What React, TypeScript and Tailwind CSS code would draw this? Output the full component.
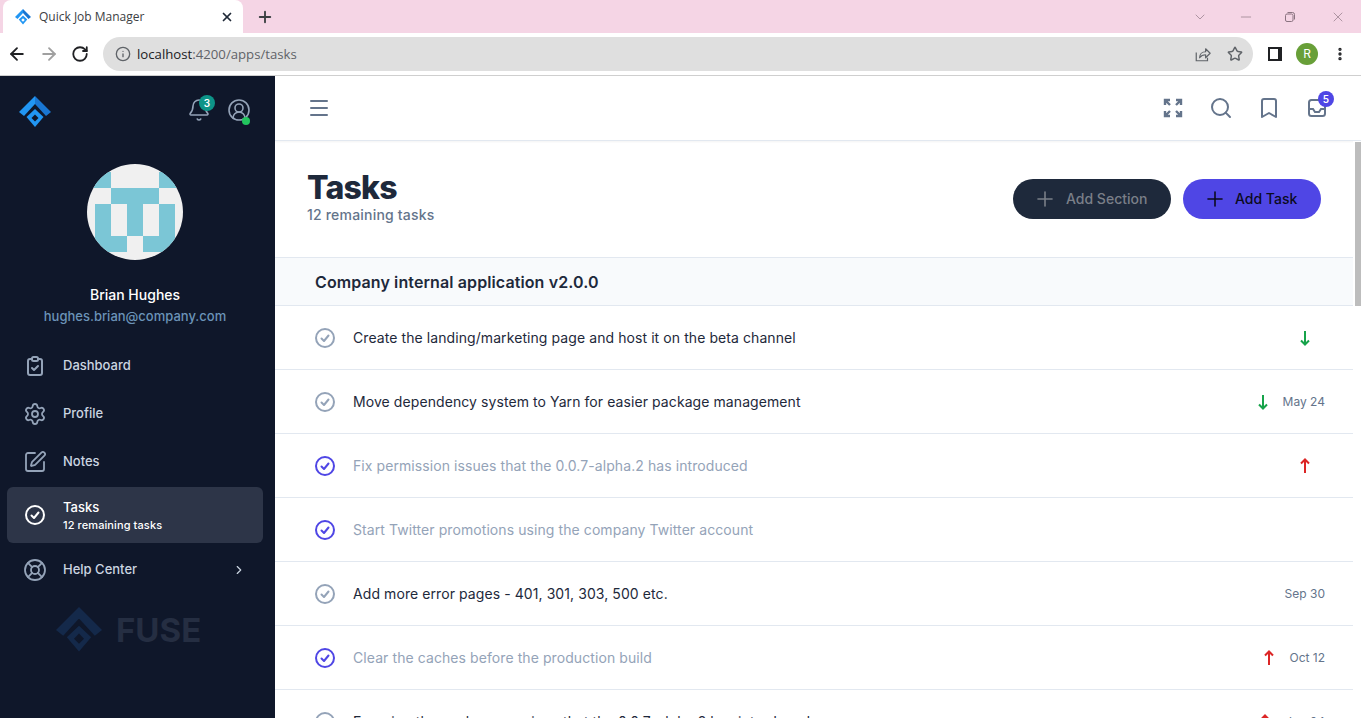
import { ArrowLeft, ArrowRight, Bell, Bookmark, ChevronDown, ChevronRight, CircleUserRound, Info, LifeBuoy, Menu, Minus, MoreVertical, Plus, RotateCw, Search, Settings, SquarePen, Star, X } from "lucide-react";

const tasks = [
  { title: "Create the landing/marketing page and host it on the beta channel", done: false, priority: "down", date: "" },
  { title: "Move dependency system to Yarn for easier package management", done: false, priority: "down", date: "May 24" },
  { title: "Fix permission issues that the 0.0.7-alpha.2 has introduced", done: true, priority: "up", date: "" },
  { title: "Start Twitter promotions using the company Twitter account", done: true, priority: "", date: "" },
  { title: "Add more error pages - 401, 301, 303, 500 etc.", done: false, priority: "", date: "Sep 30" },
  { title: "Clear the caches before the production build", done: true, priority: "up", date: "Oct 12" },
  { title: "Ensuring the package versions that the 0.0.7-alpha.2 has introduced", done: false, priority: "up", date: "Jun 04" },
];

function Logo({ className, hole = "#0f172a", dim }: { className: string; hole?: string; dim?: boolean }) {
  return (
    <svg viewBox="0 0 32 32" className={className}>
      <path d="M16 0 L16 8 L5 20 L0 16 Z" fill={dim ? "#14294a" : "#2196f3"} />
      <path d="M16 0 L32 16 L27 20 L16 8 Z" fill={dim ? "#14294a" : "#1976d2"} />
      <path d="M16 13 L24.5 21 L16 31 L7.5 21 Z" fill={dim ? "#14294a" : "#2196f3"} />
      <path d="M16 18.5 L19.5 22 L16 25.5 L12.5 22 Z" fill={hole} />
    </svg>
  );
}

function CheckCircle({ className }: { className: string }) {
  return (
    <svg viewBox="0 0 24 24" fill="none" stroke="currentColor" strokeWidth="2" className={className}>
      <circle cx="12" cy="12" r="9" />
      <path d="M8.5 12.5 L11 15 L15.5 9.5" strokeLinecap="round" strokeLinejoin="round" />
    </svg>
  );
}

function ClipboardCheck({ className }: { className: string }) {
  return (
    <svg viewBox="0 0 24 24" fill="none" stroke="currentColor" strokeWidth="2" className={className}>
      <path d="M9 5H7a2 2 0 0 0-2 2v12a2 2 0 0 0 2 2h10a2 2 0 0 0 2-2V7a2 2 0 0 0-2-2h-2" />
      <rect x="9" y="3" width="6" height="4" rx="1.5" />
      <path d="M9 14l2 2 4-4" strokeLinecap="round" strokeLinejoin="round" />
    </svg>
  );
}

function PriorityArrow({ up }: { up: boolean }) {
  return (
    <svg viewBox="0 0 20 20" fill="none" stroke="currentColor" strokeWidth="2" className={`w-5 h-5 ${up ? "text-[#dc2626]" : "text-[#16a34a]"}`}>
      {up ? <path d="M10 17V3.5M6 7.5l4-4 4 4" /> : <path d="M10 3v13.5M6 12.5l4 4 4-4" />}
    </svg>
  );
}

function Avatar() {
  const cells = [
    [1, 0, 0, 0, 1],
    [0, 1, 1, 1, 0],
    [1, 0, 1, 0, 1],
    [1, 0, 1, 0, 1],
    [1, 1, 0, 1, 1],
  ];
  return (
    <div className="w-24 h-24 rounded-full overflow-hidden bg-[#f0f0f0]">
      <svg viewBox="0 0 96 96" className="w-24 h-24">
        {cells.map((row, y) =>
          row.map((c, x) => (c ? <rect key={`${x}-${y}`} x={x * 16 + 8} y={y * 16 + 8} width="16" height="16" fill="#7bc6d6" /> : null))
        )}
        <rect x="0" y="8" width="24" height="16" fill="#7bc6d6" />
        <rect x="72" y="8" width="24" height="16" fill="#7bc6d6" />
      </svg>
    </div>
  );
}

function NavItem({ label, icon, arrow }: { label: string; icon: React.ReactNode; arrow?: boolean }) {
  return (
    <div className="h-12 px-4 flex items-center text-[13px] font-medium text-[#cbd5e1]">
      <span className="w-6 h-6 mr-4 flex items-center justify-center text-[#94a3b8]">{icon}</span>
      <span>{label}</span>
      {arrow && <ChevronRight className="w-3.5 h-3.5 ml-auto mr-[1px]" />}
    </div>
  );
}

export default function App() {
  return (
    <div className="h-[718px] w-[1361px] overflow-hidden flex flex-col bg-white font-['Inter',sans-serif]">
      {/* BROWSER TABS */}
      <div className="h-[33px] shrink-0 bg-[#f5d5e5] flex items-center pl-[3px] text-[#1f2937]">
        <div className="h-[33px] w-[240px] bg-white rounded-t-lg flex items-center pl-[12px] pr-[9px]">
          <Logo className="w-4 h-4" hole="#ffffff" />
          <span className="ml-2 text-xs text-[#3c4043] font-['Open_Sans',sans-serif]">Quick Job Manager</span>
          <X className="w-3.5 h-3.5 ml-auto" strokeWidth={3} />
        </div>
        <Plus className="w-[18px] h-[18px] ml-[13px] text-[#3c4043]" strokeWidth={2.5} />
        <div className="ml-auto h-[26px] flex items-center text-[#8a7380]">
          <ChevronDown className="w-4 h-4 mr-[30px]" strokeWidth={1} />
          <Minus className="w-4 h-4 mr-[30px]" strokeWidth={1} />
          <svg viewBox="0 0 12 12" className="w-3 h-3 mr-[34px]" fill="none" stroke="currentColor" strokeWidth="1">
            <rect x="1.5" y="3" width="7.5" height="7.5" rx="1.5" />
            <path d="M3.5 1.5h5a2 2 0 0 1 2 2v5" />
          </svg>
          <X className="w-4 h-4 mr-[15px]" strokeWidth={1} />
        </div>
      </div>

      {/* BROWSER TOOLBAR */}
      <div className="h-[43px] shrink-0 bg-white border-b border-[#cfcfcf] flex items-center pl-[7px] pr-[13px] text-[#202124]">
        <ArrowLeft className="w-5 h-5" strokeWidth={2.2} />
        <ArrowRight className="w-5 h-5 ml-[12px] text-[#a0a0a0]" strokeWidth={2.2} />
        <RotateCw className="w-[18px] h-[18px] ml-[12px]" strokeWidth={2.4} />
        <div className="ml-[14px] h-[34px] w-[1150px] rounded-full bg-[#dfdfdf] flex items-center pl-[12px] pr-[10px]">
          <Info className="w-4 h-4 text-[#5f6368]" />
          <span className="ml-[6px] pt-[2px] text-[13.2px] text-[#202124] font-['Open_Sans',sans-serif]">
            localhost<span className="text-[#5f6368]">:4200/apps/tasks</span>
          </span>
          <svg viewBox="0 0 24 24" className="w-[18px] h-[18px] ml-auto text-[#5f6368]" fill="none" stroke="currentColor" strokeWidth="1.6">
            <path d="M3 10v11h15v-4" />
            <path d="M7.5 17c0-5 3.5-8 8-8V5l6 6-6 6v-4c-3.5 0-6 1-8 4z" strokeLinejoin="round" />
          </svg>
          <Star className="w-4 h-4 ml-[15px] text-[#5f6368]" strokeWidth={2.2} />
        </div>
        <span className="ml-[15px] w-[14px] h-[14px] bg-[#202124] flex">
          <span className="w-[8px] h-[10px] m-[2px] bg-white" />
        </span>
        <span className="ml-[14px] w-[22px] h-[22px] rounded-full bg-[#689f38] text-white text-xs flex items-center justify-center">R</span>
        <MoreVertical className="w-4 h-4 ml-[14px]" strokeWidth={3} />
      </div>

      <div className="flex-1 flex min-h-0">
        {/* SIDEBAR */}
        <aside className="w-[275px] shrink-0 bg-[#0f172a] flex flex-col">
          <div className="h-[68px] flex items-center pl-[19px] pr-[24px] text-[#94a3b8]">
            <Logo className="w-8 h-8 mt-1" />
            <div className="relative ml-auto mr-4">
              <Bell className="w-6 h-6" strokeWidth={1.6} />
              <span className="absolute -top-[3px] -right-[4px] w-4 h-4 rounded-full bg-[#0d9488] text-white text-[10px] font-semibold flex items-center justify-center">3</span>
            </div>
            <div className="relative">
              <CircleUserRound className="w-6 h-6" strokeWidth={1.6} />
              <span className="absolute -bottom-[3px] right-[1px] w-2 h-2 rounded-full bg-[#22c55e]" />
            </div>
          </div>
          <div className="flex flex-col items-center pt-5 pr-[5px]">
            <Avatar />
            <div className="mt-[25px] text-sm font-medium text-white leading-5">Brian Hughes</div>
            <div className="mt-[1px] text-[13px] font-medium text-[#6b93b8] leading-5">hughes.brian@company.com</div>
          </div>
          <nav className="mt-4 pl-[7px] pr-[12px] flex flex-col">
            <NavItem label="Dashboard" icon={<ClipboardCheck className="w-6 h-6" />} />
            <NavItem label="Profile" icon={<Settings className="w-6 h-6" strokeWidth={1.8} />} />
            <NavItem label="Notes" icon={<SquarePen className="w-6 h-6" strokeWidth={1.8} />} />
            <div className="mt-[1px] h-14 px-4 rounded-md bg-[#2d3548] flex items-center text-white">
              <span className="w-6 h-6 mr-4">
                <CheckCircle className="w-6 h-6" />
              </span>
              <div>
                <div className="text-[13px] font-medium leading-5">Tasks</div>
                <div className="text-[11px] tracking-[0.1px] font-medium leading-4">12 remaining tasks</div>
              </div>
            </div>
            <div className="mt-[3px]">
              <NavItem label="Help Center" icon={<LifeBuoy className="w-6 h-6" strokeWidth={1.8} />} arrow />
            </div>
          </nav>
          <div className="mt-[13px] pl-[56px] flex items-center gap-[14px]">
            <Logo className="w-[46px] h-[46px]" dim />
            <span className="text-[33px] leading-none font-bold text-[#252e42]">FUSE</span>
          </div>
        </aside>

        {/* MAIN */}
        <main className="flex-1 min-w-0 flex flex-col">
          <header className="h-[65px] shrink-0 border-b border-[#e2e8f0] shadow-[0_1px_2px_rgba(0,0,0,0.05)] flex items-center pl-[32px] pr-[32px] text-[#64748b]">
            <Menu className="w-6 h-6" strokeWidth={2} />
            <svg viewBox="0 0 24 24" className="w-6 h-6 ml-auto" fill="none" stroke="currentColor" strokeWidth="2.4">
              <path d="M4 9V4h5M4 4l5 5M20 9V4h-5M20 4l-5 5M4 15v5h5M4 20l5-5M20 15v5h-5M20 20l-5-5" />
            </svg>
            <Search className="w-6 h-6 ml-6" strokeWidth={2} />
            <Bookmark className="w-6 h-6 ml-6" strokeWidth={2} />
            <div className="relative ml-6">
              <svg viewBox="0 0 24 24" className="w-6 h-6" fill="none" stroke="currentColor" strokeWidth="2">
                <rect x="4" y="4" width="16" height="16" rx="2.5" />
                <path d="M4 13h4l2 3h4l2-3h4" />
              </svg>
              <span className="absolute -top-[5px] -right-[5px] w-4 h-4 rounded-full bg-[#4f46e5] text-white text-[10px] font-semibold flex items-center justify-center">5</span>
            </div>
          </header>

          <div className="flex-1 min-h-0 flex">
            <div className="flex-1 min-w-0 overflow-hidden">
              <div className="h-[117px] border-b border-[#e2e8f0] flex items-center pl-[32px] pr-[32px]">
                <div className="-mt-[2px]">
                  <h1 className="text-[32px] leading-[32px] font-extrabold tracking-tight text-[#1e293b]">Tasks</h1>
                  <p className="mt-[1px] text-sm tracking-[0.2px] font-medium leading-5 text-[#64748b]">12 remaining tasks</p>
                </div>
                <button className="ml-auto h-10 w-[158px] rounded-full bg-[#1e293b] flex items-center pl-5 text-sm font-medium text-[#7a7f88]">
                  <Plus className="w-6 h-6 mr-[9px]" strokeWidth={1.6} />
                  Add Section
                </button>
                <button className="ml-3 h-10 w-[138px] rounded-full bg-[#4f46e5] flex items-center pl-5 text-sm font-medium text-[#0b0b1e]">
                  <Plus className="w-6 h-6 mr-2" strokeWidth={1.6} />
                  Add Task
                </button>
              </div>
              <div className="h-[48px] bg-[#f8fafc] border-b border-[#e2e8f0] flex items-center pl-10 text-base tracking-[0.11px] font-semibold text-[#1e293b]">
                Company internal application v2.0.0
              </div>
              {tasks.map((task) => (
                <div key={task.title} className="h-16 border-b border-[#e2e8f0] flex items-center pl-[38px] pr-[28px] text-sm">
                  <CheckCircle className={`w-6 h-6 ${task.done ? "text-[#4f46e5]" : "text-[#94a3b8]"}`} />
                  <span className={`ml-4 tracking-[0.08px] ${task.done ? "text-[#94a3b8]" : "text-[#1e293b]"}`}>{task.title}</span>
                  <div className="ml-auto flex items-center text-xs text-[#64748b]">
                    {task.priority && <PriorityArrow up={task.priority === "up"} />}
                    {task.date ? <span className="ml-[10px]">{task.date}</span> : task.priority ? <span className="w-[10px]" /> : null}
                  </div>
                </div>
              ))}
            </div>
            {/* SCROLLBAR */}
            <div className="w-[8px] shrink-0 bg-white">
              <div className="mt-[1px] ml-[2px] h-[164px] w-[6px] bg-[#bdbdbd]" />
            </div>
          </div>
        </main>
      </div>
    </div>
  );
}
